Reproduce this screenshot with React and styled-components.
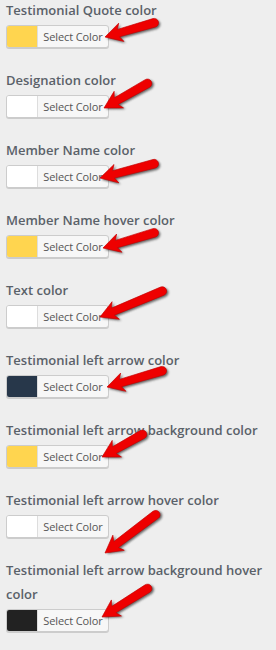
import React from 'react';
import styled, { createGlobalStyle } from 'styled-components';

const GlobalStyle = createGlobalStyle`
  html, body {
    margin: 0;
    padding: 0;
    background: #eeeeee;
  }
`;

// Página con las filas de opciones
const Page = styled.div`
  width: 276px;
  min-height: 650px;
  display: flex;
  flex-direction: column;
  gap: 22px;
  padding: 0 6px;
  box-sizing: border-box;
  font-family: "Open Sans", "Liberation Sans", sans-serif;
`;

const Row = styled.div`
  position: relative;
  display: flex;
  flex-direction: column;
  align-items: flex-start;
`;

const Label = styled.div`
  margin: -2px 0 3px;
  font-size: 13px;
  line-height: 24px;
  font-weight: 600;
  color: #5a6169;
`;

// Botón de selección de color
const ColorButton = styled.button`
  display: flex;
  align-items: stretch;
  height: 23px;
  width: 103px;
  padding: 0;
  border: 1px solid #cccccc;
  border-radius: 3px;
  background: #f7f7f7;
  box-shadow: 0 1px 0 #cccccc;
  overflow: hidden;
  cursor: pointer;
  box-sizing: border-box;
`;

const Swatch = styled.span`
  width: 30px;
  flex: none;
  background: ${(p) => p.color};
  border-right: 1px solid #dddddd;
`;

const ButtonText = styled.span`
  display: flex;
  align-items: center;
  justify-content: center;
  flex: 1;
  font-family: "Open Sans", "Liberation Sans", sans-serif;
  font-size: 11px;
  letter-spacing: -0.1px;
  color: #555555;
`;

const ArrowLayer = styled.svg`
  position: absolute;
  left: -6px;
  top: 0;
  width: 276px;
  height: 70px;
  overflow: visible;
  pointer-events: none;
`;

const RedArrow = ({ tip, tail }) => {
  const dx = tail[0] - tip[0];
  const dy = tail[1] - tip[1];
  const len = Math.sqrt(dx * dx + dy * dy);
  const angle = (Math.atan2(dy, dx) * 180) / Math.PI;
  const shape = (
    <path d={`M0 0 L17 -9.5 L14 -3.8 L${len - 3} -4.4 A4.4 4.4 0 0 1 ${len - 3} 4.4 L14 3.8 L17 9.5 Z`} />
  );
  return (
    <ArrowLayer>
      <defs>
        <filter id="arrowShadow" x="-20%" y="-50%" width="140%" height="200%">
          <feGaussianBlur stdDeviation="1.2" />
        </filter>
      </defs>
      <g transform={`translate(${tip[0]} ${tip[1]}) rotate(${angle})`}>
        <g transform="translate(1.2 2)" fill="rgba(0,0,0,0.6)" filter="url(#arrowShadow)">
          {shape}
        </g>
        <g fill="#ee0000" stroke="#c40000" strokeWidth="0.6">
          {shape}
        </g>
      </g>
    </ArrowLayer>
  );
};

const fields = [
  { label: 'Testimonial Quote color', color: '#ffd54f', tail: [157, 22], tip: [105, 37] },
  { label: 'Designation color', color: '#ffffff', tail: [150, 12], tip: [104, 38] },
  { label: 'Member Name color', color: '#ffffff', tail: [157, 23], tip: [100, 38] },
  { label: 'Member Name hover color', color: '#ffd54f', tail: [157, 22], tip: [103, 38] },
  { label: 'Text color', color: '#ffffff', tail: [165, 10], tip: [100, 37] },
  { label: 'Testimonial left arrow color', color: '#27374a', tail: [165, 20], tip: [107, 37] },
  { label: 'Testimonial left arrow background color', color: '#ffd54f', tail: [145, 13], tip: [102, 37] },
  { label: 'Testimonial left arrow hover color', color: '#ffffff', tail: [158, 23], tip: [105, 63] },
  { label: 'Testimonial left arrow background hover color', color: '#222222', tail: [150, 27], tip: [102, 57] },
];

const App = () => (
  <>
    <GlobalStyle />
    <Page>
      {fields.map((f) => (
        <Row key={f.label}>
          <Label>{f.label}</Label>
          <ColorButton type="button">
            <Swatch color={f.color} />
            <ButtonText>Select Color</ButtonText>
          </ColorButton>
          <RedArrow tip={f.tip} tail={f.tail} />
        </Row>
      ))}
    </Page>
  </>
);

export default App;
